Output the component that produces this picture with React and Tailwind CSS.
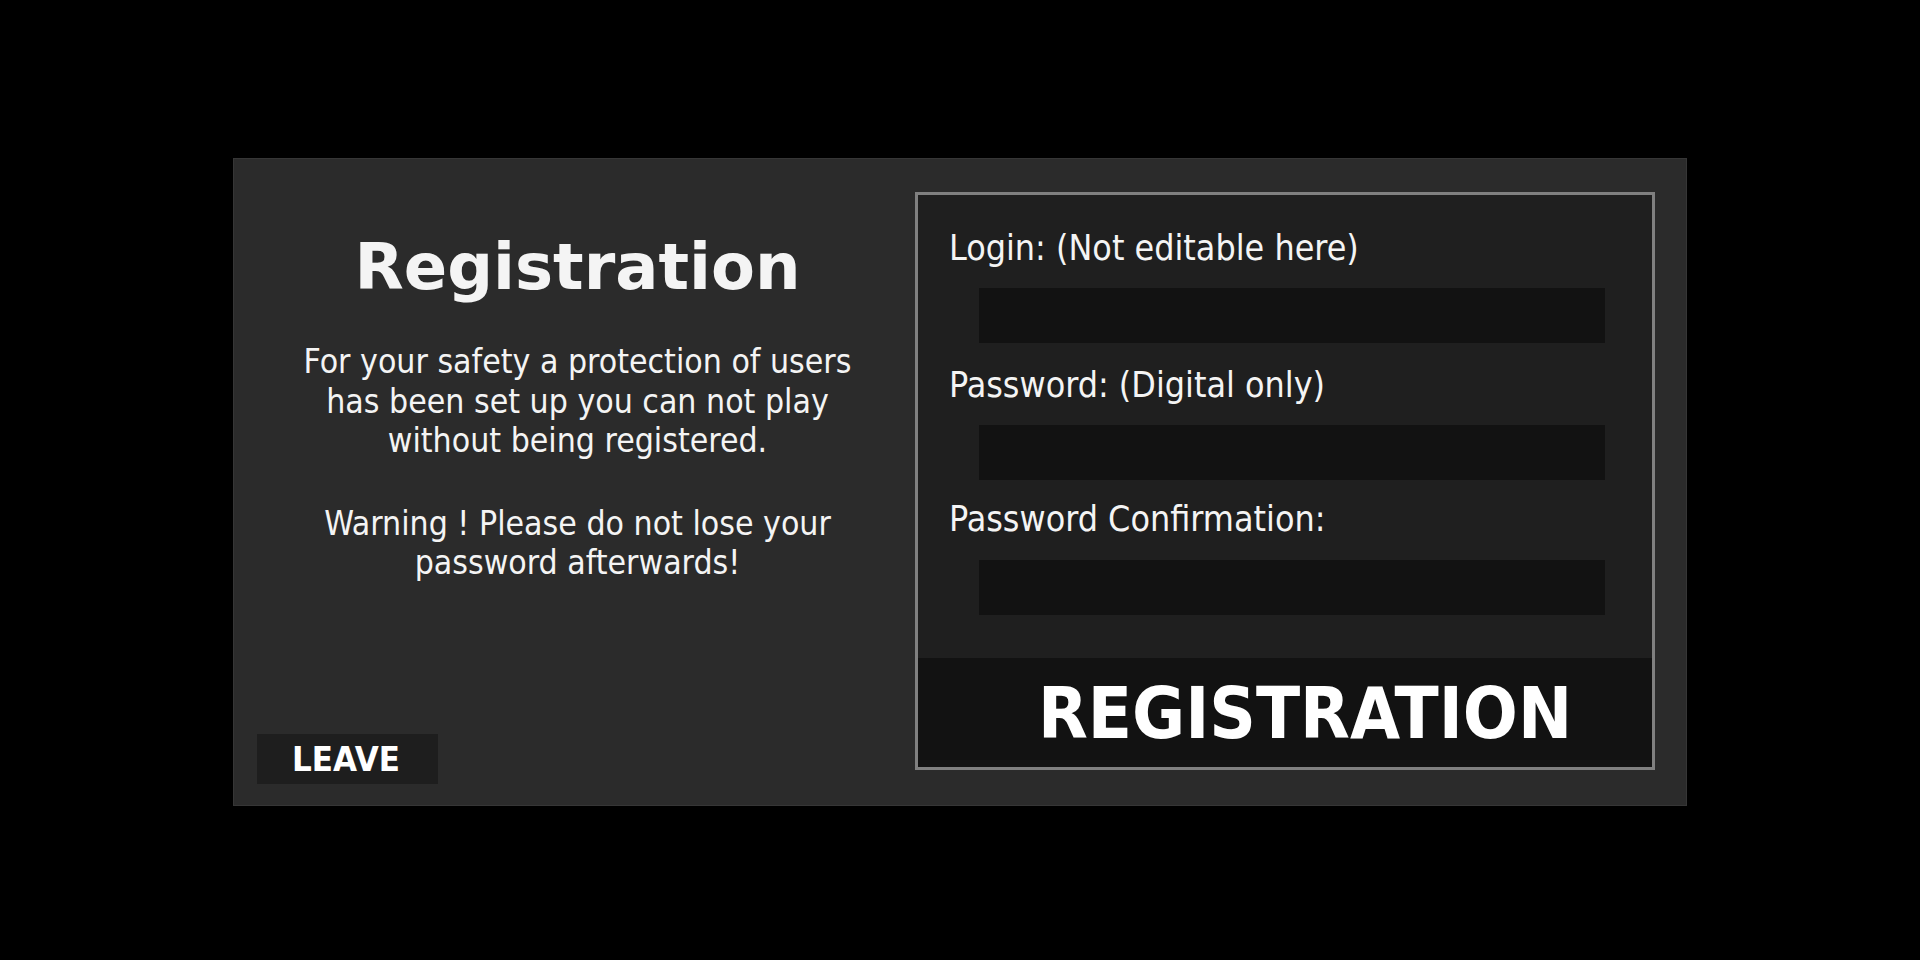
import React from "react";

const cond = { fontFamily: "'DejaVu Sans Condensed','DejaVu Sans',sans-serif" };

export default function App() {
  return (
    <div className="w-full h-[960px] bg-black flex items-center justify-center pt-[4px]">
      <div className="w-[1454px] h-[648px] bg-[#2b2b2b] border border-[#363636] shadow-[0_0_8px_rgba(0,0,0,0.9)] flex text-[#f4f4f4]">
        {/* Left column */}
        <div className="flex-1 flex flex-col pl-[6px]">
          <div className="flex flex-col items-center pt-[76px]">
            <h1
              className="text-[64px] leading-none font-bold"
              style={{ fontFamily: "'DejaVu Sans',sans-serif" }}
            >
              Registration
            </h1>
            <p className="mt-[43px] text-[33.5px] leading-[39.5px] text-center font-stretch-condensed" style={cond}>
              For your safety a protection of users
              <br />
              has been set up you can not play
              <br />
              without being registered.
            </p>
            <p className="mt-[43px] text-[33.5px] leading-[39.5px] text-center font-stretch-condensed" style={cond}>
              Warning ! Please do not lose your
              <br />
              password afterwards!
            </p>
          </div>
          <button
            className="mt-auto mb-[21px] ml-[17px] self-start w-[181px] h-[50px] bg-[#1e1e1e] flex items-center justify-center text-[34.5px] font-bold leading-none text-white font-stretch-condensed pr-[3px]"
            style={cond}
          >
            LEAVE
          </button>
        </div>

        {/* Right box */}
        <div className="w-[740px] mt-[33px] mb-[35px] mr-[31px] border-[3px] border-[#808080] bg-[#1f1f1f] flex flex-col">
          <div className="flex flex-col pt-[36px] pl-[31px] pr-[47px] font-stretch-condensed" style={cond}>
            <label className="text-[35.5px] leading-[33px] h-[33px]">Login: (Not editable here)</label>
            <div className="mt-[24px] ml-[30px] h-[55px] bg-[#121212]" />
            <label className="mt-[25px] text-[35.5px] leading-[33px] h-[33px]">Password: (Digital only)</label>
            <div className="mt-[24px] ml-[30px] h-[55px] bg-[#121212]" />
            <label className="mt-[22px] text-[35.5px] leading-[33px] h-[33px]">Password Confirmation:</label>
            <div className="mt-[25px] ml-[30px] h-[55px] bg-[#121212]" />
          </div>
          <div className="mt-auto h-[109px] bg-[#121212] flex items-center justify-center pl-[40px]">
            <span
              className="text-[72px] font-bold leading-none text-white font-stretch-condensed"
              style={cond}
            >
              REGISTRATION
            </span>
          </div>
        </div>
      </div>
    </div>
  );
}
